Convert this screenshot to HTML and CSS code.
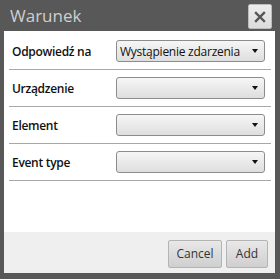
FILE: index.html
```html
<!DOCTYPE html>
<html>
<head>
<meta charset="utf-8">
<link rel="stylesheet" href="styles.css">
</head>
<body>
<div class="dialog">
  <div class="titlebar">
    <span class="title">Warunek</span>
    <span class="close"><svg width="12" height="12" viewBox="0 0 12 12"><path d="M2 2 L10 10 M10 2 L2 10" stroke="#555" stroke-width="2.4" stroke-linecap="square"/></svg></span>
  </div>
  <div class="content">
    <div class="row"><span class="label">Odpowiedź na</span><div class="select"><span class="val">Wystąpienie zdarzenia</span><span class="arrow"></span></div></div>
    <div class="row"><span class="label">Urządzenie</span><div class="select"><span class="val"></span><span class="arrow"></span></div></div>
    <div class="row"><span class="label">Element</span><div class="select"><span class="val"></span><span class="arrow"></span></div></div>
    <div class="row"><span class="label">Event type</span><div class="select"><span class="val"></span><span class="arrow"></span></div></div>
  </div>
  <div class="footer">
    <button class="btn">Cancel</button>
    <button class="btn">Add</button>
  </div>
</div>
</body>
</html>
```
FILE: styles.css
```css
html, body { margin: 0; padding: 0; }
body { font-family: "Open Sans", "Noto Sans", sans-serif; background: #585858; }
.dialog {
  width: 280px; height: 279px; box-sizing: border-box;
  background: #585858;
  padding: 0 5px 6px 4px;
  display: flex; flex-direction: column;
}
.titlebar {
  height: 31px; flex: none;
  display: flex; align-items: center; justify-content: space-between;
  padding-left: 6px; padding-right: 3px;
}
.title { color: #cfcfcf; font-size: 17px; line-height: 20px; margin-top: 1px; }
.close {
  width: 24px; height: 25px; box-sizing: border-box;
  background: linear-gradient(#ececec, #dcdcdc);
  border: 1px solid #bcbcbc; border-radius: 2px;
  display: flex; align-items: center; justify-content: center;
  margin-top: 2px;
}
.content {
  flex: 1; background: #fff;
  padding: 2px 4px 0 5px;
}
.row {
  height: 36px; border-bottom: 1px solid #a8a8a8;
  display: flex; align-items: center;
  padding-left: 3px;
}
.label { width: 104px; font-size: 12px; font-weight: 600; color: #111; letter-spacing: -0.3px; }
.select {
  width: 149px; height: 22px; box-sizing: border-box;
  border: 1px solid #8c8c8c; border-radius: 3px;
  background: linear-gradient(#f6f6f6, #dedede);
  display: flex; align-items: center; justify-content: space-between;
  padding: 0 6px 0 3px;
}
.val { font-size: 12px; color: #111; letter-spacing: -0.25px; }
.arrow {
  width: 0; height: 0;
  border-left: 3.5px solid transparent; border-right: 3.5px solid transparent;
  border-top: 4px solid #111;
}
.footer {
  height: 41px; flex: none; background: #efefef;
  display: flex; justify-content: flex-end; align-items: center; gap: 4px;
  padding-right: 7px; padding-top: 2px; box-sizing: border-box;
}
.btn {
  height: 28px; box-sizing: border-box;
  border: 1px solid #b4b4b4; border-radius: 2px;
  background: linear-gradient(#e8e8e8, #cfcfcf);
  font-family: "Open Sans", "Noto Sans", sans-serif; font-size: 12px; color: #333;
  padding: 0; margin: 0;
}
.btn:first-child { width: 54px; }
.btn:last-child { width: 42px; }
```
